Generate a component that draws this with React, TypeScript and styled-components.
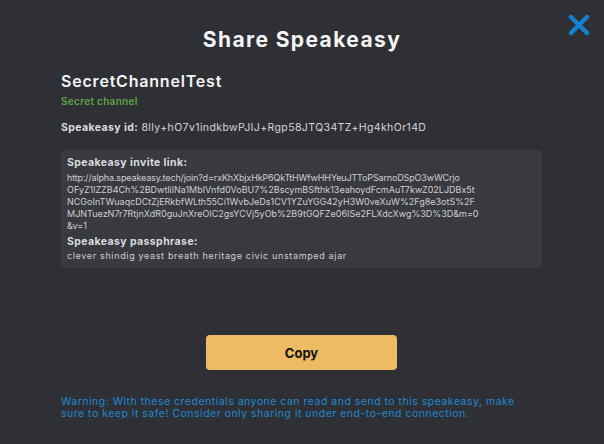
import styled, { createGlobalStyle } from 'styled-components';

const GlobalStyle = createGlobalStyle`
  html, body {
    margin: 0;
    padding: 0;
    background: #2e3035;
  }
  body {
    font-family: Inter, "Open Sans", "Liberation Sans", sans-serif;
  }
`;

const Page = styled.div`
  min-height: 444px;
  box-sizing: border-box;
  padding: 14px 14px 0 14px;
  background: #2e3035;
  color: #d6d6d6;
`;

const Header = styled.div`
  display: grid;
  grid-template-columns: 1fr auto 1fr;
  align-items: start;
`;

const Title = styled.h1`
  grid-column: 2;
  margin: 13px 0 0 0;
  font-size: 21px;
  line-height: 26px;
  font-weight: 700;
  color: #f4f4f4;
  letter-spacing: 1.4px;
`;

const CloseButton = styled.button`
  grid-column: 3;
  justify-self: end;
  width: 24px;
  height: 22px;
  padding: 0;
  margin-right: -1px;
  border: none;
  background: none;
  cursor: pointer;
  display: flex;
  align-items: center;
  justify-content: center;
`;

const Body = styled.div`
  padding: 0 48px 0 47px;
  display: flex;
  flex-direction: column;
`;

const ChannelName = styled.h2`
  margin: 18px 0 0 0;
  font-size: 16px;
  line-height: 20px;
  font-weight: 600;
  color: #f4f4f4;
  letter-spacing: 0.8px;
`;

const ChannelType = styled.div`
  margin-top: 3px;
  font-size: 10px;
  line-height: 14px;
  font-weight: 600;
  color: #5ea445;
  letter-spacing: 0.3px;
`;

const IdRow = styled.div`
  margin-top: 13px;
  font-size: 10.5px;
  line-height: 14px;
  color: #d6d6d6;
  letter-spacing: 0.4px;
`;

const Label = styled.span`
  font-weight: 700;
  color: #dcdcdc;
`;

const InviteBox = styled.div`
  margin-top: 15px;
  padding: 6px 6px 6px 6px;
  border-radius: 4px;
  background: #383a3f;
  display: flex;
  flex-direction: column;
`;

const BoxLabel = styled.div<{ $gap?: number }>`
  margin-top: ${p => p.$gap ?? 0}px;
  font-size: 10.5px;
  line-height: 14px;
  font-weight: 700;
  color: #dcdcdc;
  letter-spacing: 0.4px;
`;

const Mono = styled.div<{ $gap?: number; $spacing?: number }>`
  margin-top: ${p => p.$gap ?? 0}px;
  font-size: 9px;
  line-height: 12px;
  color: #cfcfcf;
  white-space: nowrap;
  letter-spacing: ${p => p.$spacing ?? 0}px;
`;

const CopyButton = styled.button`
  align-self: center;
  margin-top: 67px;
  width: 191px;
  height: 35px;
  border: none;
  border-radius: 4px;
  background: #ecbb63;
  color: #111;
  font-family: inherit;
  font-size: 13px;
  font-weight: 700;
  cursor: pointer;
`;

const Warning = styled.p`
  margin: 26px 0 0 0;
  font-size: 10.5px;
  line-height: 12px;
  color: #1f8ad2;
  letter-spacing: 0.5px;
`;

const urlLines = [
  'http://alpha.speakeasy.tech/join?d=rxKhXbjxHkP6QkTtHWfwHHYeuJTToPSarnoDSpO3wWCrjo',
  'OFyZ1lZZB4Ch%2BDwtlilNa1MblVnfd0VoBU7%2BscymBSfthk13eahoydFcmAuT7kwZ02LJDBx5t',
  'NCGoInTWuaqcDCtZjERkbfWLth55Ci1WvbJeDs1CV1YZuYGG42yH3W0veXuW%2Fg8e3otS%2F',
  'MJNTuezN7r7RtjnXdR0guJnXreOlC2gsYCVj5yOb%2B9tGQFZe06ISe2FLXdcXwg%3D%3D&m=0',
  '&v=1',
];

const CloseIcon = () => (
  <svg width="24" height="22" viewBox="0 0 24 22">
    <path d="M4 3 L20 19 M20 3 L4 19" stroke="#1680d2" strokeWidth="4.4" strokeLinecap="round" />
  </svg>
);

export default function App() {
  return (
    <Page>
      <GlobalStyle />
      <Header>
        <Title>Share Speakeasy</Title>
        <CloseButton aria-label="Close">
          <CloseIcon />
        </CloseButton>
      </Header>
      <Body>
        <ChannelName>SecretChannelTest</ChannelName>
        <ChannelType>Secret channel</ChannelType>
        <IdRow>
          <Label>Speakeasy id:</Label> 8lly+hO7v1indkbwPJIJ+Rgp58JTQ34TZ+Hg4khOr14D
        </IdRow>
        <InviteBox>
          <BoxLabel>Speakeasy invite link:</BoxLabel>
          {urlLines.map((line, i) => (
            <Mono key={i} $gap={i === 0 ? 2 : 0} $spacing={i === 0 ? -0.15 : 0}>{line}</Mono>
          ))}
          <BoxLabel $gap={3}>Speakeasy passphrase:</BoxLabel>
          <Mono $gap={1} $spacing={0.65}>clever shindig yeast breath heritage civic unstamped ajar</Mono>
        </InviteBox>
        <CopyButton>Copy</CopyButton>
        <Warning>
          Warning: With these credentials anyone can read and send to this speakeasy, make
          <br />
          sure to keep it safe! Consider only sharing it under end-to-end connection.
        </Warning>
      </Body>
    </Page>
  );
}
